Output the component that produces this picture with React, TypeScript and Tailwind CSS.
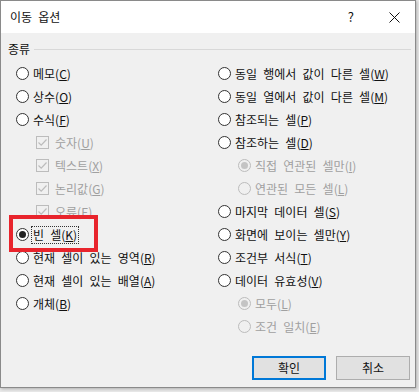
import React from 'react';

const font = "font-['Malgun_Gothic','Noto_Sans_CJK_KR','Noto_Sans',sans-serif]";

function Radio({ checked = false, disabled = false }: { checked?: boolean; disabled?: boolean }) {
  return (
    <span
      className={`flex h-[13px] w-[13px] shrink-0 items-center justify-center rounded-full border ${
        disabled ? 'border-[#bcbcbc] bg-[#f0f0f0]' : 'border-[#333333] bg-white'
      }`}
    >
      {checked ? (
        <span className={`h-[7px] w-[7px] rounded-full ${disabled ? 'bg-[#c4c4c4]' : 'bg-[#222222]'}`} />
      ) : null}
    </span>
  );
}

function Check() {
  return (
    <span className="flex h-[13px] w-[13px] shrink-0 items-center justify-center border border-[#bcbcbc] bg-[#f0f0f0]">
      <svg width="11" height="11" viewBox="0 0 11 11">
        <path d="M1.5 5.5 L4.2 8.2 L9.5 2.5" fill="none" stroke="#bcbcbc" strokeWidth="1.2" />
      </svg>
    </span>
  );
}

function Label({ text, k, disabled = false }: { text: string; k: string; disabled?: boolean }) {
  return (
    <span className={`block whitespace-nowrap text-[12px] leading-[16px] [word-spacing:3.5px] ${disabled ? 'text-[#a0a0a0]' : 'text-[#111111]'}`}>
      {text}(<u>{k}</u>)
    </span>
  );
}

type Row = { text: string; k: string; kind: 'radio' | 'check'; indent?: boolean; disabled?: boolean; checked?: boolean; focus?: boolean };

const left: Row[] = [
  { text: '메모', k: 'C', kind: 'radio' },
  { text: '상수', k: 'O', kind: 'radio' },
  { text: '수식', k: 'F', kind: 'radio' },
  { text: '숫자', k: 'U', kind: 'check', indent: true, disabled: true },
  { text: '텍스트', k: 'X', kind: 'check', indent: true, disabled: true },
  { text: '논리값', k: 'G', kind: 'check', indent: true, disabled: true },
  { text: '오류', k: 'E', kind: 'check', indent: true, disabled: true },
  { text: '빈 셀', k: 'K', kind: 'radio', checked: true, focus: true },
  { text: '현재 셀이 있는 영역', k: 'R', kind: 'radio' },
  { text: '현재 셀이 있는 배열', k: 'A', kind: 'radio' },
  { text: '개체', k: 'B', kind: 'radio' },
];

const right: Row[] = [
  { text: '동일 행에서 값이 다른 셀', k: 'W', kind: 'radio' },
  { text: '동일 열에서 값이 다른 셀', k: 'M', kind: 'radio' },
  { text: '참조되는 셀', k: 'P', kind: 'radio' },
  { text: '참조하는 셀', k: 'D', kind: 'radio' },
  { text: '직접 연관된 셀만', k: 'I', kind: 'radio', indent: true, disabled: true, checked: true },
  { text: '연관된 모든 셀', k: 'L', kind: 'radio', indent: true, disabled: true },
  { text: '마지막 데이터 셀', k: 'S', kind: 'radio' },
  { text: '화면에 보이는 셀만', k: 'Y', kind: 'radio' },
  { text: '조건부 서식', k: 'T', kind: 'radio' },
  { text: '데이터 유효성', k: 'V', kind: 'radio' },
  { text: '모두', k: 'L', kind: 'radio', indent: true, disabled: true, checked: true },
  { text: '조건 일치', k: 'E', kind: 'radio', indent: true, disabled: true },
];

function Item({ r }: { r: Row }) {
  return (
    <div className={`relative flex h-[23px] items-center gap-[4px] ${r.indent ? 'pl-[20px]' : ''}`}>
      {r.kind === 'radio' ? <Radio checked={r.checked} disabled={r.disabled} /> : <Check />}
      {r.focus ? (
        <span className="-ml-[2px] block border border-dotted border-[#333] px-[1px] py-0">
          <Label text={r.text} k={r.k} disabled={r.disabled} />
        </span>
      ) : (
        <span className={`block ${r.kind === 'check' ? 'pl-[2px]' : ''}`}>
          <Label text={r.text} k={r.k} disabled={r.disabled} />
        </span>
      )}
      {r.focus ? (
        <span className="pointer-events-none absolute left-[-7px] top-[-8px] z-10 h-[37px] w-[89px] border-[4px] border-[#e8242c]" />
      ) : null}
    </div>
  );
}

export default function App() {
  return (
    <div className={`h-[392px] w-[419px] overflow-hidden bg-[#e9e9e9] leading-[16px] ${font}`}>
      <div className="flex h-[388px] w-[416px] flex-col border border-[#8a8a8a] bg-[#f0f0f0] shadow-[1px_1px_3px_rgba(0,0,0,0.25)]">
        <div className="flex h-[32px] items-center bg-white pl-[9px]">
          <span className="text-[12px] leading-[16px] text-[#111] [word-spacing:3.5px]">이동 옵션</span>
          <span className="ml-auto mr-[35px] text-[13px] text-[#111]">?</span>
          <svg className="mr-[15px]" width="11" height="11" viewBox="0 0 11 11">
            <path d="M0.5 0.5 L10.5 10.5 M10.5 0.5 L0.5 10.5" stroke="#111" strokeWidth="1" />
          </svg>
        </div>
        <div className="flex items-center gap-[4px] pl-[7px] pr-[4px] pt-[8px]">
          <span className="text-[12px] leading-[16px] text-[#111]">종류</span>
          <span className="h-px flex-1 bg-[#d8d8d8]" />
        </div>
        <div className="grid grid-cols-[202px_1fr] pl-[15px] pt-[5px]">
          <div className="flex flex-col">
            {left.map((r, i) => (
              <Item key={i} r={r} />
            ))}
          </div>
          <div className="flex flex-col">
            {right.map((r, i) => (
              <Item key={i} r={r} />
            ))}
          </div>
        </div>
        <div className="mt-auto flex justify-end gap-[10px] pb-[7px] pr-[5px]">
          <button className="h-[24px] w-[74px] border-2 border-[#0078d7] bg-[#e1e1e1] text-[12px] text-[#111]">확인</button>
          <button className="h-[24px] w-[74px] border border-[#adadad] bg-[#e1e1e1] text-[12px] text-[#111]">취소</button>
        </div>
      </div>
    </div>
  );
}
